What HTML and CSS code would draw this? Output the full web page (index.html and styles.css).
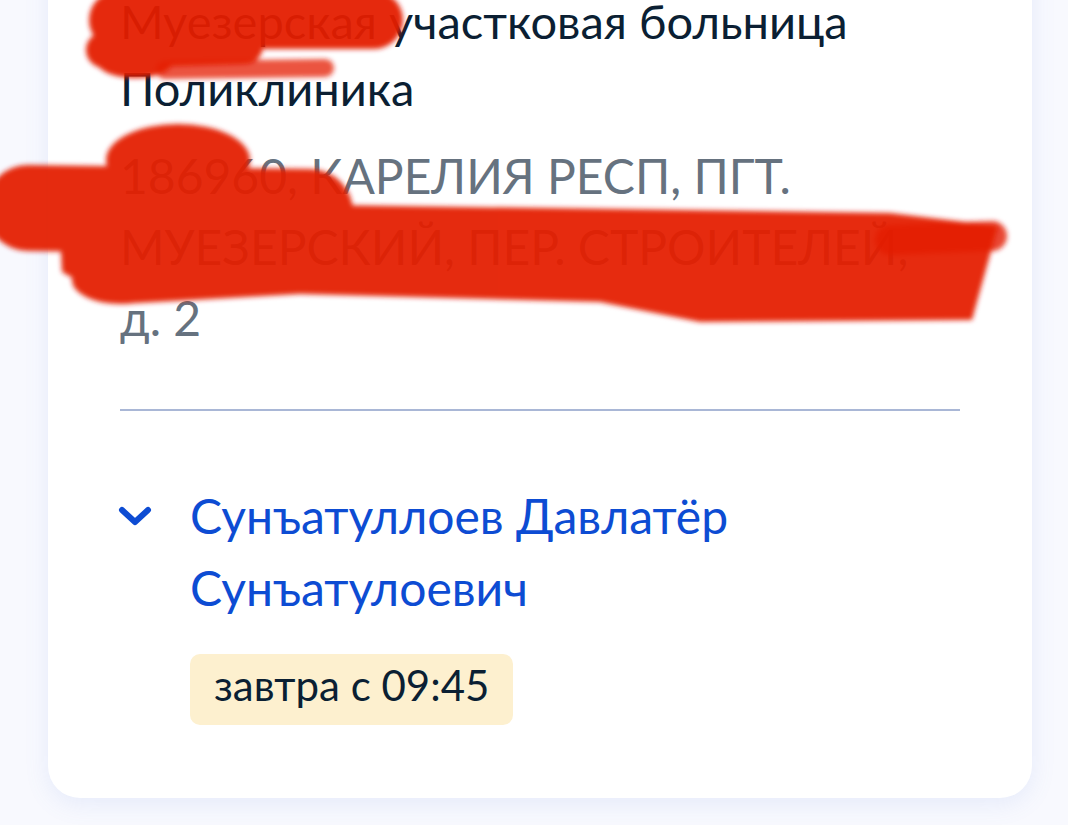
FILE: index.html
```html
<!DOCTYPE html>
<html lang="ru">
<head>
  <meta charset="UTF-8">
  <title>Запись к врачу</title>
  <link rel="stylesheet" href="styles.css">
</head>
<body>
  <div class="card">
    <div class="org-name">Муезерская участковая больница Поликлиника</div>
    <div class="org-address">186960, КАРЕЛИЯ РЕСП, ПГТ.<br>МУЕЗЕРСКИЙ, ПЕР. СТРОИТЕЛЕЙ,<br>д. 2</div>
    <div class="divider"></div>
    <div class="doctor">
      <div class="chevron">
        <svg width="34" height="20" viewBox="0 0 34 20">
          <path d="M4 4 L17 16 L30 4" fill="none" stroke="#0d4cd3" stroke-width="6" stroke-linecap="round" stroke-linejoin="round"/>
        </svg>
      </div>
      <div class="doctor-info">
        <div class="doctor-name">Сунъатуллоев Давлатёр Сунъатулоевич</div>
        <span class="badge">завтра с 09:45</span>
      </div>
    </div>
  </div>

  <!-- пометки маркером поверх текста -->
  <svg class="scribble" width="1068" height="360" viewBox="0 0 1068 360">
    <defs>
      <filter id="soft" x="-10%" y="-10%" width="120%" height="120%">
        <feGaussianBlur stdDeviation="2.5"/>
      </filter>
    </defs>
    <g filter="url(#soft)" fill="#e41c02" stroke="#e41c02" stroke-linecap="round">
      <g opacity="0.95">
        <line x1="118" y1="20" x2="374" y2="20" stroke-width="58"/>
        <line x1="104" y1="50" x2="245" y2="46" stroke-width="36"/>
        <ellipse cx="135" cy="62" rx="38" ry="16" stroke="none"/>
      </g>
      <line x1="165" y1="70" x2="325" y2="68" stroke-width="18" opacity="0.75"/>
      <g opacity="0.94">
        <ellipse cx="178" cy="160" rx="72" ry="36" stroke="none"/>
        <line x1="28" y1="208" x2="310" y2="212" stroke-width="86"/>
        <polygon stroke="none" points="60,232 330,205 890,213 998,226 978,298 972,320 700,322 600,302 300,294 120,304 62,272"/>
        <ellipse cx="120" cy="280" rx="48" ry="24" stroke="none"/>
      </g>
      <line x1="890" y1="240" x2="992" y2="236" stroke-width="30" opacity="0.8"/>
    </g>
  </svg>
</body>
</html>
```

FILE: styles.css
```css
body {
  margin: 0;
  background: #f8f9fe;
  font-family: Lato, "Open Sans", "Noto Sans", sans-serif;
  color: #0b1f33;
  position: relative;
  overflow: hidden;
  height: 825px;
}
.card {
  margin: -40px 36px 0 48px;
  width: 840px;
  padding: 28px 72px 73px;
  background: #fff;
  border-radius: 0 0 32px 32px;
  box-shadow: 0 6px 24px rgba(100, 130, 220, 0.12);
}
.org-name {
  font-size: 47px;
  line-height: 67px;
}
.org-address {
  margin-top: 18px;
  font-size: 48px;
  line-height: 71px;
  color: #66727f;
}
.divider {
  margin-top: 56px;
  height: 2px;
  background: #a9b7d6;
}
.doctor {
  display: flex;
  gap: 38px;
  margin-top: 69px;
}
.chevron {
  height: 72px;
  display: flex;
  align-items: center;
  margin-left: -2px;
}
.chevron svg {
  display: block;
}
.doctor-info {
  flex: 1;
}
.doctor-name {
  font-size: 48px;
  line-height: 72px;
  color: #0d4cd3;
}
.badge {
  display: inline-block;
  margin-top: 30px;
  padding: 4px 24px 12px;
  background: #fdf0cf;
  border-radius: 10px;
  font-size: 42px;
  line-height: 55px;
}
.scribble {
  position: absolute;
  left: 0;
  top: 0;
  pointer-events: none;
}
```
